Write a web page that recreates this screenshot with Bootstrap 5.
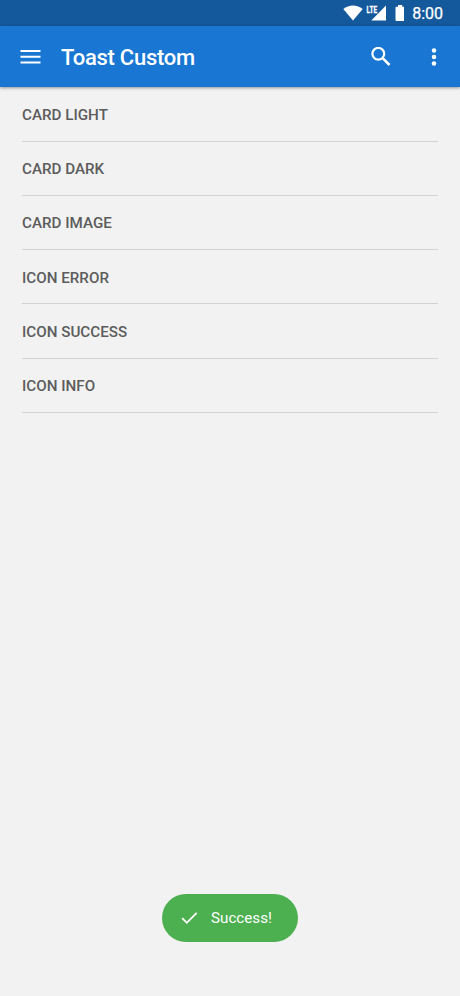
<!DOCTYPE html>
<html lang="en">
<head>
<meta charset="utf-8">
<meta name="viewport" content="width=device-width, initial-scale=1">
<title>Toast Custom</title>
<link href="https://cdn.jsdelivr.net/npm/bootstrap@5.3.0/dist/css/bootstrap.min.css" rel="stylesheet">
<style>
body{font-family:Roboto,sans-serif;background:#f2f2f2;height:996px;overflow:hidden}
.status-bar{height:26px;background:#14599c;padding-right:17px}
.clock{font-size:16px;line-height:26px;margin-left:8px;padding-top:2px;-webkit-text-stroke:.25px #fff}
.app-bar{height:60.5px;background:#1976d2;padding:1px 19px 0 20px;box-shadow:0 1px 3px rgba(0,0,0,.4)}
.app-title{font-size:22px;font-weight:500;line-height:28px;margin-left:20px;letter-spacing:-.25px;padding-top:2px}
.bar-btn{background:none;border:0;padding:0}
.more-btn{margin-left:37px;margin-right:1px}
.options{padding:0 22px}
.option{height:54.25px;padding-top:2px;border-bottom:1px solid #d2d2d2;font-size:15.2px;font-weight:500;color:#5c5c5c;line-height:20px}
.option:first-child{height:55px}
.snack{width:136px;height:48px;background:#4caf50;margin-bottom:54px;padding-left:19px;font-size:15.2px}
.snack-text{margin-left:13px}
svg{display:block;flex:none}
.lte{font:700 9.5px Roboto,sans-serif;stroke:#fff;stroke-width:.3px}
</style>
</head>
<body class="d-flex flex-column">
<div class="status-bar d-flex align-items-center justify-content-end text-white">
<svg width="62" height="26" viewBox="342 0 62 26" fill="#fff">
<path d="M343.3 9C349 4.2 357 4.2 362.7 9L353 20.6Z"/>
<path d="M386 5.5V20.5H371.3Z"/>
<text class="lte" x="366.6" y="12.8" textLength="10.5" lengthAdjust="spacingAndGlyphs">LTE</text>
<path d="M398 5H402.2V6.7H404Q404.9 6.7 404.9 7.6V20Q404.9 21 404 21H396.5Q395.5 21 395.5 20V7.6Q395.5 6.7 396.5 6.7H398Z"/>
</svg>
<span class="clock">8:00</span>
</div>
<nav class="app-bar d-flex align-items-center text-white">
<button class="bar-btn" type="button" aria-label="Menu"><svg width="21" height="14" viewBox="0 0 21 14" fill="#fff"><path d="M.5 0H20.5V2H.5ZM.5 5.7H20.5V7.7H.5ZM.5 11.4H20.5V13.4H.5Z"/></svg></button>
<h1 class="app-title mb-0">Toast Custom</h1>
<button class="bar-btn ms-auto" type="button" aria-label="Search"><svg width="20" height="20" viewBox="371.5 46.8 20 20" fill="none" stroke="#fff"><circle cx="378.8" cy="53.6" r="5.9" stroke-width="2.2"/><path d="M383.4 58.2L390 64.8" stroke-width="2.6"/></svg></button>
<button class="bar-btn more-btn" type="button" aria-label="More"><svg width="12" height="20" viewBox="428 46.5 12 20" fill="#fff"><circle cx="434" cy="50" r="2.25"/><circle cx="434" cy="56.5" r="2.25"/><circle cx="434" cy="63" r="2.25"/></svg></button>
</nav>
<main class="options flex-grow-1">
<div class="option d-flex align-items-center">CARD LIGHT</div>
<div class="option d-flex align-items-center">CARD DARK</div>
<div class="option d-flex align-items-center">CARD IMAGE</div>
<div class="option d-flex align-items-center">ICON ERROR</div>
<div class="option d-flex align-items-center">ICON SUCCESS</div>
<div class="option d-flex align-items-center">ICON INFO</div>
</main>
<div class="snack rounded-pill mx-auto text-white d-flex align-items-center" role="status">
<svg width="17" height="14" viewBox="0 0 17 14" fill="none" stroke="#fff" stroke-width="1.8"><path d="M1.2 7.2L5.8 11.8L15.7 1.9"/></svg>
<span class="snack-text">Success!</span></div>
<script src="https://cdn.jsdelivr.net/npm/bootstrap@5.3.0/dist/js/bootstrap.bundle.min.js"></script>
</body>
</html>
